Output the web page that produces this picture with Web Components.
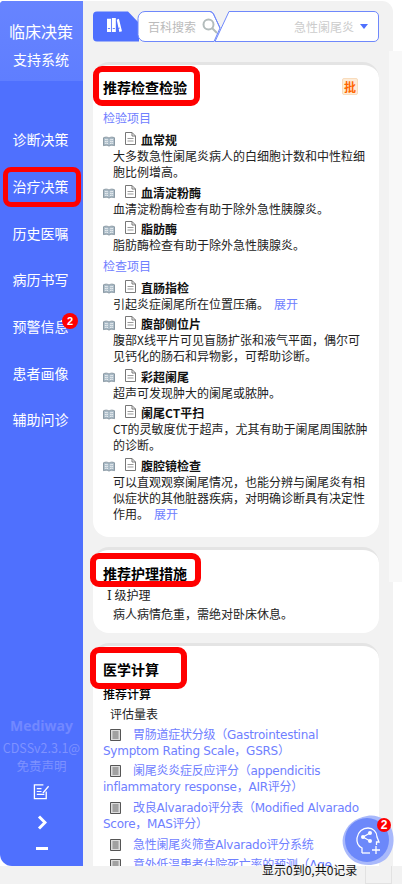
<!DOCTYPE html>
<html lang="zh"><head><meta charset="utf-8"><title>临床决策</title>
<style>
html,body{margin:0;padding:0;height:884px;overflow:hidden;background:#fff;font-family:"Noto Sans CJK SC","Noto Sans",sans-serif;font-size:12px;color:#222}
</style></head><body>
<cdss-app>
  <side-nav slot="side">
    <nav-item>诊断决策</nav-item>
    <nav-item marked>治疗决策</nav-item>
    <nav-item>历史医嘱</nav-item>
    <nav-item>病历书写</nav-item>
    <nav-item badge="2">预警信息</nav-item>
    <nav-item>患者画像</nav-item>
    <nav-item>辅助问诊</nav-item>
  </side-nav>
  <top-bar slot="top"></top-bar>
  <info-card slot="cards" style="--pt:12px;--pb:11px">
    <card-title style="--l:-10px;--t:-11px;--w:107px;--h:40px">推荐检查检验</card-title>
    <pi-tag slot="tag"></pi-tag>
    <sub-head first>检验项目</sub-head>
    <rec-item name="血常规">大多数急性阑尾炎病人的白细胞计数和中性粒细胞比例增高。</rec-item>
    <rec-item name="血清淀粉酶">血清淀粉酶检查有助于除外急性胰腺炎。</rec-item>
    <rec-item name="脂肪酶">脂肪酶检查有助于除外急性胰腺炎。</rec-item>
    <sub-head>检查项目</sub-head>
    <rec-item name="直肠指检">引起炎症阑尾所在位置压痛。<more-link>展开</more-link></rec-item>
    <rec-item name="腹部侧位片">腹部X线平片可见盲肠扩张和液气平面，偶尔可见钙化的肠石和异物影，可帮助诊断。</rec-item>
    <rec-item name="彩超阑尾">超声可发现肿大的阑尾或脓肿。</rec-item>
    <rec-item name="阑尾CT平扫">CT的灵敏度优于超声，尤其有助于阑尾周围脓肿的诊断。</rec-item>
    <rec-item name="腹腔镜检查">可以直观观察阑尾情况，也能分辨与阑尾炎有相似症状的其他脏器疾病，对明确诊断具有决定性作用。<more-link>展开</more-link></rec-item>
  </info-card>
  <info-card slot="cards" style="--pt:13px;--pb:11px">
    <card-title style="--l:-13px;--t:-10px;--w:111px;--h:34px">推荐护理措施</card-title>
    <plain-line indent="4" top="4"><span style="font-family:'DejaVu Serif','Liberation Serif',serif">Ⅰ</span> 级护理</plain-line>
    <plain-line indent="10" top="2">病人病情危重，需绝对卧床休息。</plain-line>
  </info-card>
  <info-card slot="cards" style="--pt:13px">
    <card-title style="--l:-13px;--t:-12px;--w:97px;--h:42px">医学计算</card-title>
    <plain-line strong top="7">推荐计算</plain-line>
    <plain-line indent="7" top="4">评估量表</plain-line>
    <calc-link>胃肠道症状分级（Gastrointestinal Symptom Rating Scale，GSRS）</calc-link>
    <calc-link>阑尾炎炎症反应评分（appendicitis inflammatory response，AIR评分）</calc-link>
    <calc-link>改良Alvarado评分表（Modified Alvarado Score，MAS评分）</calc-link>
    <calc-link>急性阑尾炎筛查Alvarado评分系统</calc-link>
    <calc-link>意外低温患者住院死亡率的预测（Age</calc-link>
  </info-card>
  <pager-note slot="foot">显示0到0,共0记录</pager-note>
  <float-help slot="float"></float-help>
</cdss-app>
<script>
function def(name, css, html, extra){
  customElements.define(name, class extends HTMLElement{
    constructor(){super();const s=this.attachShadow({mode:'open'});s.innerHTML='<style>'+css+'</style>'+html;}
    connectedCallback(){ if(extra) extra.call(this,this.shadowRoot); }
  });
}
const RED='#f00';
def('cdss-app',`
:host{display:grid;grid-template-columns:83px 310px 9px;grid-template-rows:866px 18px;width:402px;height:884px;position:relative;overflow:hidden;background:#fff}
.side{grid-column:1;grid-row:1;display:flex}
.main{grid-column:2;grid-row:1;background:#f2f2f2;border-radius:0 11px 0 0;margin-top:1px;display:flex;flex-direction:column;min-height:0;overflow:hidden}
.cards{display:flex;flex-direction:column;gap:10px;padding:0 14px 0 10px;margin-top:11px;min-height:0;flex:1;overflow:hidden}
.foot{grid-column:1/4;grid-row:2;background:#f2f2f2;display:flex;padding-left:262px;position:relative}
.gutter{position:absolute;left:389px;top:51px;width:13px;height:531px;background:#f8f8f8}
.fl{position:absolute;left:0;top:0}
.pg{position:absolute;left:365px;top:0;width:27px;height:18px;box-sizing:border-box;border:1px solid #e2e2e2;border-top:0}
`,`<div class="side"><slot name="side"></slot></div>
<div class="main"><slot name="top"></slot><div class="cards"><slot name="cards"></slot></div></div>
<div class="foot"><slot name="foot"></slot><div class="pg"></div></div><div class="gutter"></div><div class="fl"><slot name="float"></slot></div>`);

def('side-nav',`
:host{display:flex;flex-direction:column;width:83px;height:865px;margin-top:1px;background:#4f70fe;border-radius:4px 0 0 12px;color:#fff;overflow:hidden}
.hd{height:80px;background:linear-gradient(#6784ff,#5f7eff);display:flex;flex-direction:column;align-items:center;box-sizing:border-box;padding:18px 1px 0 0;gap:6px}
.a{font-size:16px;line-height:24px}.b{font-size:14px;line-height:20px}
.nav{padding-top:35px;display:flex;flex-direction:column}
.ft{margin-top:auto;display:flex;flex-direction:column;align-items:center;padding-bottom:16px;color:#7e92ff}
.logo{font:700 14px/18px "Open Sans",sans-serif;color:#7288ff;margin-bottom:4px}
.v{font-size:12.500px;line-height:18px;white-space:nowrap}
svg{display:block}
`,`<div class="hd"><div class="a">临床决策</div><div class="b">支持系统</div></div>
<div class="nav"><slot></slot></div>
<div class="ft"><div class="logo">Mediway</div><div class="v">CDSSv2.3.1@</div><div class="v">免责声明</div>
<svg width="17" height="17" viewBox="0 0 18 18" fill="none" stroke="#fff" style="margin-top:8px"><path d="M14 9v7.500H1.500V2H11" stroke-width="1.400"/><path d="M4 6h5M4 9h5M4 12h8" stroke-width="1.200"/><path d="M10 10l6-7 1 1-6 7z" fill="#fff" stroke="none"/></svg>
<svg width="10" height="15" viewBox="0 0 10 15" fill="none" stroke="#fff" stroke-width="3" style="margin-top:15px"><path d="M2 1.500l6 6-6 6"/></svg>
<div style="width:12px;height:3px;background:#fff;margin-top:17px"></div></div>`);

def('nav-item',`
:host{display:flex;height:46.700px;align-items:center;justify-content:center;position:relative;font-size:14px;line-height:20px;color:#fff;padding-right:2px;box-sizing:border-box}
.badge{position:absolute;left:62px;top:10px;width:16px;height:16px;border-radius:50%;background:#f00;color:#fff;font:700 11px/16px "Liberation Sans",sans-serif;text-align:center}
.mark{position:absolute;left:3px;top:4px;width:78px;height:40px;box-sizing:border-box;border:5px solid ${RED};border-radius:8px}
`,`<slot></slot>`,function(s){
  const b=this.getAttribute('badge');
  if(b&&!s.querySelector('.badge')){const d=document.createElement('div');d.className='badge';d.textContent=b;s.appendChild(d);}
  if(this.hasAttribute('marked')&&!s.querySelector('.mark')){const d=document.createElement('div');d.className='mark';s.appendChild(d);}
});

def('top-bar',`
:host{display:block;position:relative;height:40px;flex:none;margin:10px 14px 0 10px}
.bg{position:absolute;left:0;top:0}
.row{position:relative;display:flex;align-items:center;height:30px;font-size:12px}
.bk{width:15px;margin-left:14px;display:flex;margin-top:-3px}
.s{margin-left:26px;color:#bbb;width:48px;white-space:nowrap}
.m{margin-left:6px;display:flex}
.d{margin-left:76px;color:#ccc;width:60px;white-space:nowrap}
.c{margin-left:6px;width:0;height:0;border:4px solid transparent;border-top:5px solid #4f70fe;border-bottom:0}
`,`<svg class="bg" width="288" height="32" viewBox="0 0 288 32">
<path d="M4 .500H35L46 12V30.500H4a4 4 0 0 1-4-4V4.500a4 4 0 0 1 4-4z" fill="#4f70fe"/>
<path d="M52 .500H117q2 0 3.500 2.500L127 17 121 30.500H52a7 7 0 0 1-7-7V7.500a7 7 0 0 1 7-7z" fill="#fff" stroke="#6f88fb"/>
<path d="M136 .500H281a4.500 4.500 0 0 1 4.500 4.500V26a4.500 4.500 0 0 1-4.500 4.500H122z" fill="#fff" stroke="#6f88fb"/>
<path d="M117 .500q2 0 3.500 2.500L127 17" fill="none" stroke="#6f88fb"/>
</svg>
<div class="row"><div class="bk"><svg width="17" height="16" viewBox="0 0 17 16" fill="#fff"><path d="M0 1h4.500v15H0zM5.500 0H10v16H5.500zM11 2l2.500-1 3.500 14-3 1z"/><path d="M1 12h2.500M6.500 12H9M12.500 12l2-.5" stroke="#4f70fe"/></svg></div>
<div class="s">百科搜索</div>
<div class="m"><svg width="16" height="16" viewBox="0 0 16 16" fill="none" stroke="#b3bcbc" stroke-width="2"><circle cx="6.500" cy="6.500" r="5"/><path d="M10 10l5 5"/></svg></div>
<div class="d">急性阑尾炎</div><div class="c"></div></div>`);

def('info-card',`
:host{display:block;flex:none;position:relative;background:#fff;border-top:3px solid #e4e4e4;border-radius:16px;padding:var(--pt,12px) 8px var(--pb,14px) 10px}
.tag{position:absolute;right:21px;top:13px}
`,`<div class="tag"><slot name="tag"></slot></div><slot></slot>`);

def('card-title',`
:host{display:block;position:relative;font-size:14px;font-weight:700;line-height:20px;color:#000}
.mark{position:absolute;left:var(--l);top:var(--t);width:var(--w);height:var(--h);box-sizing:border-box;border:6px solid ${RED};border-radius:9px}
`,`<slot></slot><div class="mark"></div>`);

def('pi-tag',`
:host{display:block;width:16px;height:17px;box-sizing:border-box;background:#fdecd8;border:1px solid #f9dcbc;border-radius:2px;color:#f60;font-size:12px;font-weight:700;line-height:15px;text-align:center}
`,`批`);

def('sub-head',`
:host{display:block;color:#6f80ff;font-size:12px;line-height:16px;margin:0 0 6px}
:host([first]){margin-top:13px}
`,`<slot></slot>`);

def('rec-item',`
:host{display:block;margin-bottom:4.500px;font-size:12px;line-height:16px}
.h{display:flex;align-items:center;height:16px;font-weight:700;color:#111}
.bk{width:12px;margin-right:10px;display:flex;margin-top:2px}
.dc{width:11px;margin-right:5px;display:flex;margin-top:-3px}
.t{padding-left:10px;color:#222}
`,`<div class="h"><span class="bk"><svg width="13" height="11" viewBox="0 0 13 11"><path d="M.5 1.500C2.500.5 4.800.5 6.500 1.800 8.200.5 10.500.5 12.500 1.500V10C10.500 9.200 8.200 9.200 6.500 10.500 4.800 9.200 2.500 9.200.5 10z" fill="#a9bac6" stroke="#82919c"/><path d="M2 3.500c1.300-.3 2.500-.2 3.500.3M2 5.500c1.300-.3 2.500-.2 3.500.3M2 7.500c1.300-.3 2.500-.2 3.500.3M11 3.500c-1.300-.3-2.500-.2-3.500.3M11 5.500c-1.300-.3-2.500-.2-3.500.3M11 7.500c-1.300-.3-2.500-.2-3.500.3" stroke="#fff" fill="none" stroke-width=".8"/></svg></span><span class="dc"><svg width="11" height="13" viewBox="0 0 11 13" fill="none" stroke="#777"><path d="M.5.500H7L10.500 4V12.500H.5zM7 .500V4H10.500"/><path d="M2.500 6.500h6M2.500 9h6" stroke="#999"/></svg></span><span id="n"></span></div><div class="t"><slot></slot></div>`,function(s){s.getElementById('n').textContent=this.getAttribute('name');});

def('more-link',`:host{color:#6f80ff;margin-left:5px}`,`<slot></slot>`);

def('plain-line',`
:host{display:block;font-size:12px;line-height:16px;color:#222}
:host([strong]){font-weight:500;color:#000}
`,`<slot></slot>`,function(){
  this.style.paddingLeft=(this.getAttribute('indent')||0)+'px';
  this.style.marginTop=(this.getAttribute('top')||0)+'px';
});

def('calc-link',`
:host{display:block;font-family:"DejaVu Sans","Noto Sans CJK SC",sans-serif;font-size:12px;line-height:16px;color:#6f80ff;margin-top:4.700px;text-spacing-trim:space-all;letter-spacing:-.25px}
svg{display:inline-block;vertical-align:-2px;margin:0 12px 0 7px}
`,`<svg width="11" height="12" viewBox="0 0 11 12"><path d="M.5.500h10v11H.5z" fill="#ddd" stroke="#555"/><path d="M2.500 3h6M2.500 5h6M2.500 7h6M2.500 9h6" stroke="#666"/></svg><slot></slot>`);

def('pager-note',`:host{display:block;font-size:12px;line-height:12px;margin-top:-2px;color:#111;white-space:nowrap;position:relative}`,`<slot></slot>`);

def('float-help',`
:host{display:block;position:absolute;left:341px;top:813px;width:55px;height:55px}
svg{position:absolute;left:0;top:0}
.b{position:absolute;left:36px;top:5px;width:14px;height:14px;border-radius:50%;background:#f00;color:#fff;font:700 12px/14px "Liberation Sans",sans-serif;text-align:center}
`,`<svg width="55" height="55" viewBox="0 0 55 55" fill="none">
<path d="M26 3C36 1 46 6 51 17 54 26 53 37 46 45 38 53 24 54 14 49 5 44 0 33 2 24 5 12 14 5 26 3z" fill="#a9b9fb"/>
<circle cx="26" cy="27" r="22" fill="#6c88fa"/>
<path d="M21 40V35C17 33 15.500 29 16 25 17 18.500 22 15 27 15 32 15 36 19 36 24L38 29H35.500V32" stroke="#fff" stroke-width="1.300"/>
<path d="M21 40H29" stroke="#fff" stroke-width="1.300"/>
<g fill="#fff"><circle cx="22" cy="24" r="2"/><circle cx="29" cy="20" r="2"/><circle cx="29" cy="28" r="2"/></g><path d="M22 24l7-4M22 24l7 4" stroke="#fff" stroke-width="1.200"/>
<path d="M35 33v8M31 37h8" stroke="#fff" stroke-width="1.300"/></svg><div class="b">2</div>`);
</script>
</body></html>
